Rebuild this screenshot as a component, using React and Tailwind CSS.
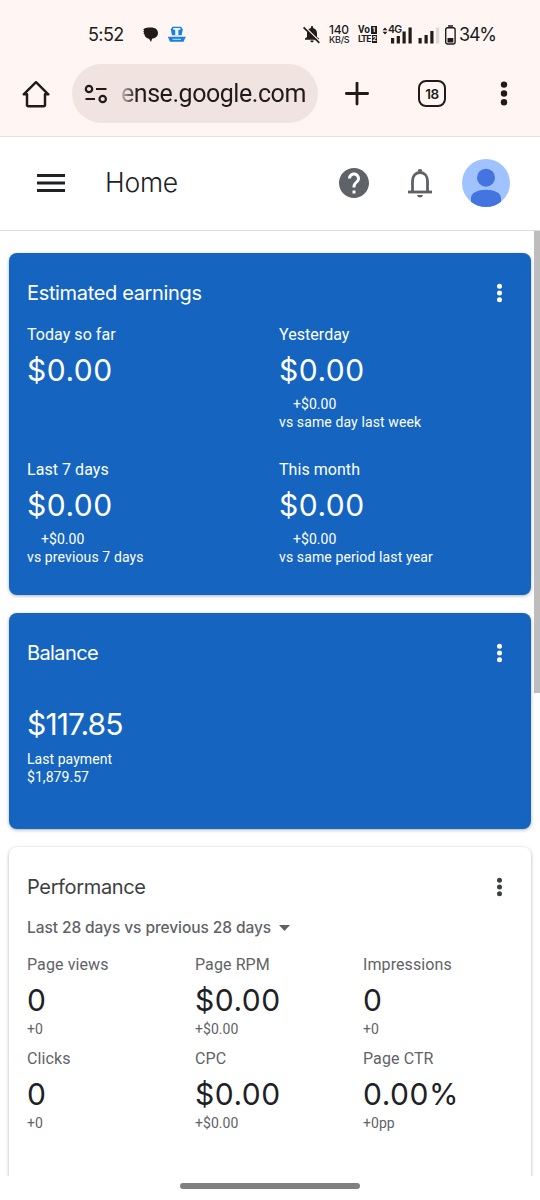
import React from "react";

const cx = (...c) => c.filter(Boolean).join(" ");

function Dots({ className }) {
  return (
    <svg className={cx("h-[20px] w-[8px]", className)} viewBox="0 0 8 20" fill="currentColor">
      <circle cx="4.5" cy="3.2" r="2.5" />
      <circle cx="4.5" cy="10" r="2.5" />
      <circle cx="4.5" cy="16.8" r="2.5" />
    </svg>
  );
}

function StatusBar() {
  return (
    <div className="flex h-[52px] items-center pt-[17px] text-[#211b1a]">
      <div className="ml-[88px] w-[55px] font-[Inter,sans-serif] text-[18px] leading-[34px] tracking-[-0.6px]">5:52</div>
      <svg className="h-[16px] w-[16px]" viewBox="0 0 16 16" fill="currentColor">
        <path d="M.3 2.200C2.300.8 5 .500 8 .500c4.300 0 7 2.200 7 5.500 0 3.200-2.400 5.400-5.800 5.600L8 15l-1.900-3.300C3.500 11.200 1.700 9.600 1.400 7.200L.4 6.200l.7-.7L.2 4.300l.9-.6z" />
      </svg>
      <svg className="ml-[8px] h-[17px] w-[20px]" viewBox="0 0 20 17">
        <path d="M5.300.8h8.900l1.500 2.700-1 5.700H5L3.800 3.500z" fill="#1a7fe0" />
        <path d="M6.200 2h7.200v1.800h-2v5.400H8.200V3.800h-2z" fill="#eef6ff" />
        <path d="M.8 10.800h18l-2.300 5H3z" fill="#1a7fe0" />
        <path d="M5.500 13.300h8.500" stroke="#b9dcff" strokeWidth="1.100" />
      </svg>
      <svg className="ml-[116px] h-[20px] w-[18px]" viewBox="0 0 18 20" fill="currentColor">
        <path d="M2 14.800v-1.300l2-1.500V8c0-2.700 1.700-4.500 3.900-5.100V2.200a1.100 1.100 0 0 1 2.200 0v.7C12.300 3.500 14 5.300 14 8v4l2 1.500v1.300zM7.200 15.600h3.600a1.800 1.800 0 0 1-3.600 0z" />
        <path d="M1.600 1.800 17.400 17.300" stroke="#fff6f4" strokeWidth="1.800" />
        <path d="M.6 2.400 16.300 17.800" stroke="currentColor" strokeWidth="1.700" />
      </svg>
      <div className="ml-[8px] flex w-[25px] flex-col gap-[1px] font-[Inter,sans-serif] font-medium">
        <span className="flex h-[9px] items-center text-[12px] leading-[9px] tracking-[-0.300px]">140</span>
        <span className="flex h-[9px] items-center text-[9px] leading-[9px] tracking-[-0.200px]">KB/S</span>
      </div>
      <div className="ml-[4px] flex w-[19px] flex-col gap-[1px] font-[Roboto,sans-serif] text-[10px] font-bold">
        <span className="flex h-[8px] items-center leading-[8px] whitespace-nowrap">Vo<span className="ml-[1px] flex h-[8px] w-[6px] items-center justify-center bg-[#211b1a] text-[7px] leading-[8px] text-[#fff6f4]">1</span></span>
        <span className="flex h-[8px] items-center text-[9px] leading-[8px] tracking-[-0.600px] whitespace-nowrap">LTE<span className="ml-[1px] flex h-[8px] w-[5px] items-center justify-center bg-[#211b1a] text-[7px] leading-[8px] text-[#fff6f4]">2</span></span>
      </div>
      <div className="relative ml-[5px] h-[18px] w-[32px]">
        <svg className="h-[18px] w-[32px]" viewBox="0 0 32 18" fill="currentColor">
          <path d="M.5 4.200 3 1.500l2.500 2.700zM.5 5.800 3 8.500l2.500-2.700z" />
          <path d="M9 12h3.200v5.500H9zM14.700 10h3.200v7.500h-3.200zM20.500 5.500h3.200v12h-3.200zM26.500 1.500h3.200v16h-3.200z" />
        </svg>
        <span className="absolute top-0 left-[6px] font-[Inter,sans-serif] text-[10.500px] leading-[8px] font-semibold tracking-[-0.700px]">4G</span>
      </div>
      <svg className="ml-[4px] h-[18px] w-[22px]" viewBox="0 0 22 18" fill="currentColor">
        <path d="M.500 12h3.200v5.500H.500zM6.500 9h3.200v8.500H6.500zM12.300 5h3.200v12.500h-3.200z" />
        <path d="M18 1.500h3.200v16H18z" fill="#ded8d6" />
      </svg>
      <svg className="ml-[5px] h-[20px] w-[11px]" viewBox="0 0 11 20" fill="none">
        <path d="M3 1h5" stroke="currentColor" strokeWidth="1.500" />
        <rect x=".7" y="2.700" width="9.400" height="16.300" rx="2" stroke="currentColor" strokeWidth="1.400" />
        <path d="M2.500 13h5.800v4.500H2.500z" fill="currentColor" />
      </svg>
      <span className="ml-[3px] font-[Inter,sans-serif] text-[18px] leading-[34px] tracking-[-1.200px]">34%</span>
    </div>
  );
}

function BrowserBar() {
  return (
    <div className="flex h-[84px] items-start pt-[12px] text-[#211a19]">
      <svg className="mt-[16px] ml-[22px] h-[28px] w-[28px]" viewBox="0 0 28 28" fill="none" stroke="currentColor" strokeWidth="2.500" strokeLinejoin="round">
        <path d="M1.700 14.300 14 2.200l12.300 12.100H23v10.400q0 1.500-1.500 1.500h-15Q5 26.200 5 24.700V14.300z" />
      </svg>
      <div className="ml-[22px] flex h-[59px] w-[246px] items-center overflow-hidden rounded-full bg-[#f0e3e0]">
        <svg className="ml-[12px] h-[20px] w-[24px]" viewBox="0 0 24 20" fill="none" stroke="currentColor" strokeWidth="2.200">
          <circle cx="5" cy="5" r="3.200" />
          <path d="M12 5h10.500M1.500 15H11" />
          <circle cx="18.700" cy="15" r="3.200" />
        </svg>
        <span className="ml-[13px] bg-linear-to-r from-[#c8bcba] from-0% to-[#211a19] to-9% bg-clip-text font-[Roboto,sans-serif] text-[25px] leading-[40px] tracking-[-0.450px] whitespace-nowrap text-transparent">ense.google.com</span>
      </div>
      <svg className="mt-[18px] ml-[27px] h-[24px] w-[24px]" viewBox="0 0 24 24" stroke="currentColor" strokeWidth="2.800" strokeLinecap="round">
        <path d="M1.400 11.500h21.200M12 .9v21.200" />
      </svg>
      <div className="mt-[16px] ml-[49px] flex h-[27px] w-[28px] items-center justify-center rounded-[8px] border-[2.500px] border-[#211a19] font-[Inter,sans-serif] text-[13.500px] leading-[20px] font-semibold tracking-[-0.400px]">18</div>
      <svg className="mt-[17px] ml-[54px] h-[26px] w-[8px]" viewBox="0 0 8 26" fill="currentColor">
        <circle cx="4" cy="3.600" r="3.200" />
        <circle cx="4" cy="12.500" r="3.200" />
        <circle cx="4" cy="21.300" r="3.200" />
      </svg>
    </div>
  );
}

function AppHeader() {
  return (
    <header className="flex h-[94px] items-center border-b border-[#dadce0] bg-white pb-[2px]">
      <svg className="ml-[37px] h-[18px] w-[28px]" viewBox="0 0 28 18" fill="#202124">
        <path d="M0 0h28v3H0zM0 7.500h28v3H0zM0 15h28v3H0z" />
      </svg>
      <h1 className="ml-[40px] w-[234px] pb-[1px] font-[Inter,sans-serif] text-[26.500px] leading-[36px] font-[350] tracking-[-0.200px] text-[#202124]">Home</h1>
      <svg className="h-[30px] w-[30px]" viewBox="2 2 20 20" fill="#5f6368">
        <path d="M12 2C6.480 2 2 6.480 2 12s4.480 10 10 10 10-4.480 10-10S17.520 2 12 2zm1 17h-2v-2h2v2zm2.070-7.750l-.9.920C13.450 12.900 13 13.500 13 15h-2v-.5c0-1.100.45-2.100 1.170-2.830l1.240-1.260c.37-.36.59-.86.59-1.410 0-1.100-.9-2-2-2s-2 .9-2 2H8c0-2.210 1.790-4 4-4s4 1.790 4 4c0 .88-.36 1.680-.93 2.250z" />
      </svg>
      <svg className="ml-[39px] h-[30px] w-[24px]" viewBox="0 0 24 30" fill="none" stroke="#5f6368">
        <path d="M4.500 23.500V13c0-5 3-8.500 7.500-8.500s7.500 3.500 7.500 8.500v10.500" strokeWidth="2.800" />
        <path d="M0 24h24" strokeWidth="2.800" />
        <path d="M9.600 3.500a2.400 2.400 0 0 1 4.800 0zM9 27h6q-.6 2.500-3 2.500t-3-2.500z" fill="#5f6368" stroke="none" />
      </svg>
      <svg className="ml-[30px] h-[48px] w-[48px]" viewBox="0 0 48 48">
        <circle cx="24" cy="24" r="24" fill="#a0c3ff" />
        <circle cx="24" cy="18.700" r="9" fill="#4374e0" />
        <path d="M9 42.700V39c0-5.300 7-8.300 15-8.300s15 3 15 8.300v3.700A24 24 0 0 1 24 48a24 24 0 0 1-15-5.300z" fill="#4374e0" />
      </svg>
    </header>
  );
}

const cardShadow = "shadow-[0_1px_3px_rgba(60,64,67,0.3),0_1px_4px_rgba(60,64,67,0.15)]";
const titleFont = "font-[Inter,sans-serif] text-[20px] leading-[30px]";
const valueFont = "font-[Inter,sans-serif] text-[30px] leading-[40px]";
const labelFont = "font-[Roboto,sans-serif] text-[16px] leading-[20px]";
const smallFont = "font-[Roboto,sans-serif] text-[14px] leading-[18px]";

function Earning({ label, value, delta, note }) {
  return (
    <div className="h-[135px] whitespace-nowrap">
      <div className={cx(labelFont, "tracking-[0.050px]")}>{label}</div>
      <div className={cx(valueFont, "mt-[5px] tracking-[0.500px]")}>{value}</div>
      {delta && <div className={cx(smallFont, "mt-[5px] pl-[14px] tracking-[0.050px]")}>{delta}</div>}
      {note && <div className={cx(smallFont, "tracking-[0.120px]")}>{note}</div>}
    </div>
  );
}

function Metric({ label, value, delta }) {
  return (
    <div className="h-[93.500px] whitespace-nowrap">
      <div className={cx(labelFont, "tracking-[0.100px] text-[#5f6368]")}>{label}</div>
      <div className={cx(valueFont, "mt-[5px] tracking-[0.500px] text-[#202124]")}>{value}</div>
      <div className={cx(smallFont, "tracking-[0.050px] text-[#5f6368]")}>{delta}</div>
    </div>
  );
}

export default function App() {
  return (
    <div className="flex h-[1200px] w-[540px] flex-col overflow-hidden bg-white">
      <div className="border-b border-[#e9dfdd] bg-[#fff6f4]">
        <StatusBar />
        <BrowserBar />
      </div>
      <AppHeader />
      <div className="flex h-[945px] overflow-hidden">
        <main className="flex w-[534px] flex-col gap-[18px] pt-[21.500px] pr-[3px] pl-[9px]">
          <section className={cx("h-[342px] shrink-0 rounded-[8px] bg-[#1565c0] pt-[25.500px] pl-[18px] text-white", cardShadow)}>
            <div className="flex items-center justify-between pr-[28px]">
              <h2 className={cx(titleFont, "tracking-[-0.340px]")}>Estimated earnings</h2>
              <Dots />
            </div>
            <div className="mt-[17px] grid grid-cols-[252px_252px]">
              <Earning label="Today so far" value="$0.00" />
              <Earning label="Yesterday" value="$0.00" delta="+$0.00" note="vs same day last week" />
              <Earning label="Last 7 days" value="$0.00" delta="+$0.00" note="vs previous 7 days" />
              <Earning label="This month" value="$0.00" delta="+$0.00" note="vs same period last year" />
            </div>
          </section>
          <section className={cx("h-[216px] shrink-0 rounded-[8px] bg-[#1565c0] pt-[25.500px] pl-[18px] text-white", cardShadow)}>
            <div className="flex items-center justify-between pr-[28px]">
              <h2 className={cx(titleFont, "tracking-[-0.600px]")}>Balance</h2>
              <Dots />
            </div>
            <div className={cx(valueFont, "mt-[36px] tracking-[-0.850px]")}>$117.85</div>
            <div className={cx(smallFont, "mt-[5.500px] tracking-[0.050px]")}>Last payment</div>
            <div className={cx(smallFont, "tracking-[0.050px]")}>$1,879.57</div>
          </section>
          <section className={cx("h-[380px] shrink-0 rounded-[8px] bg-white pt-[25.500px] pl-[18px]", cardShadow)}>
            <div className="flex items-center justify-between pr-[28px] text-[#3c4043]">
              <h2 className={cx(titleFont, "tracking-[-0.350px]")}>Performance</h2>
              <Dots />
            </div>
            <div className="mt-[16px] flex h-[20px] items-center gap-[8px] text-[#5f6368]">
              <span className="font-[Inter,sans-serif] text-[15.500px] leading-[20px] font-medium tracking-[-0.080px]">Last 28 days vs previous 28 days</span>
              <svg className="h-[6px] w-[11px]" viewBox="0 0 11 6" fill="currentColor"><path d="M0 0h11L5.500 6z" /></svg>
            </div>
            <div className="mt-[17px] grid grid-cols-[168px_168px_168px]">
              <Metric label="Page views" value="0" delta="+0" />
              <Metric label="Page RPM" value="$0.00" delta="+$0.00" />
              <Metric label="Impressions" value="0" delta="+0" />
              <Metric label="Clicks" value="0" delta="+0" />
              <Metric label="CPC" value="$0.00" delta="+$0.00" />
              <Metric label="Page CTR" value="0.00%" delta="+0pp" />
            </div>
          </section>
        </main>
        <div className="h-[462px] w-[6px] bg-[#bdbdbd]" />
      </div>
      <div className="flex h-[24px] shrink-0 justify-center bg-white pt-[7px]">
        <div className="h-[6px] w-[180px] rounded-full bg-[#808080]" />
      </div>
    </div>
  );
}
